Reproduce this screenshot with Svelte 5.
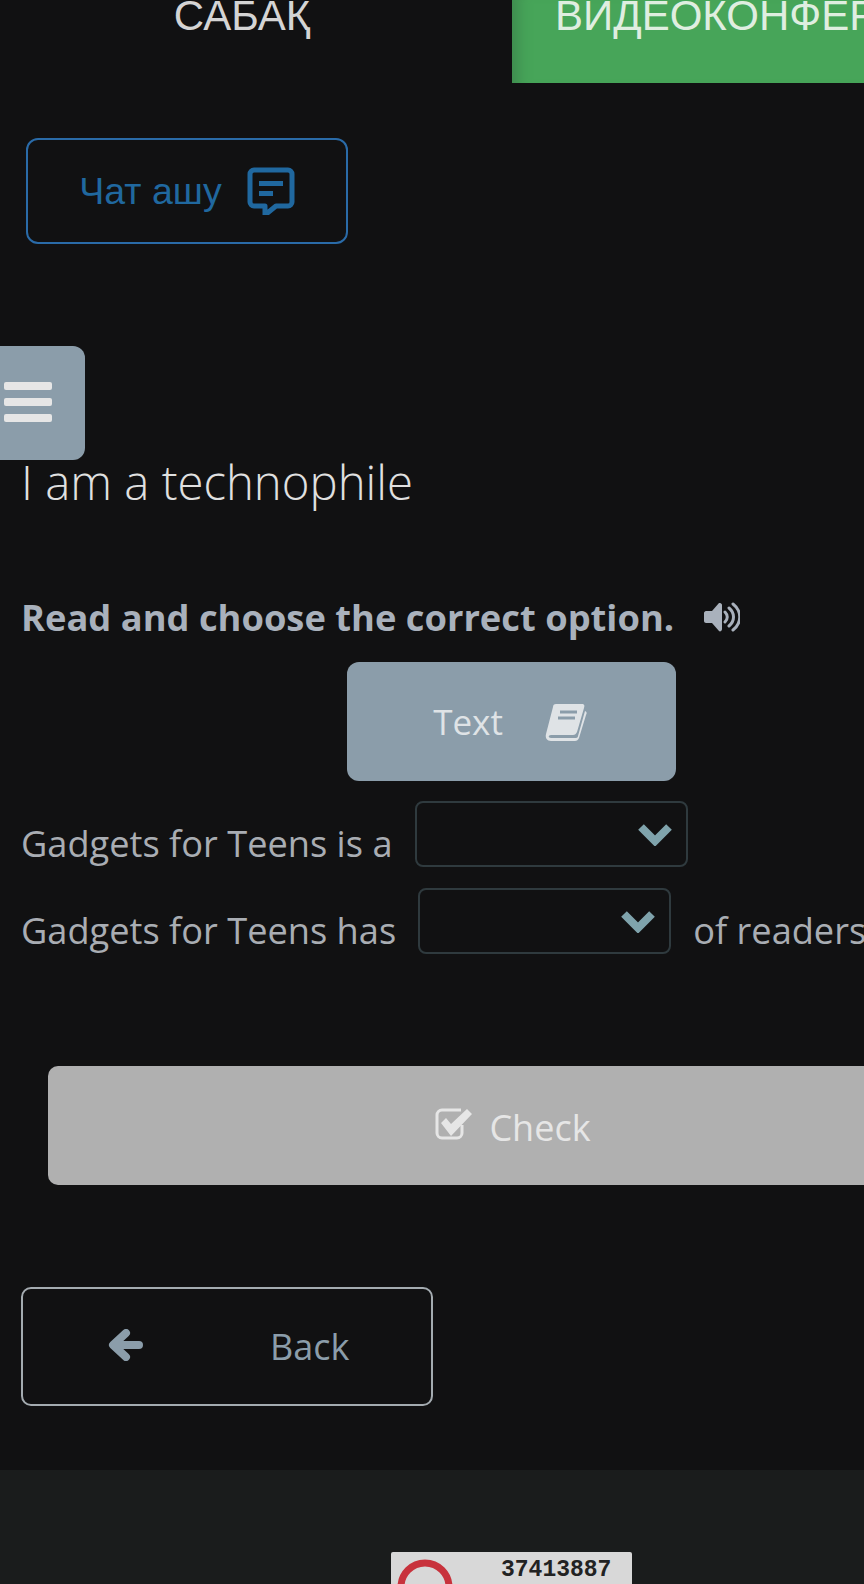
<script>
    const rows = [
        { before: 'Gadgets for Teens is a', width: 273, after: '' },
        { before: 'Gadgets for Teens has', width: 253, after: 'of readers' }
    ];
</script>

<div class="page">
    <nav class="tabs">
        <div class="tab">САБАҚ</div>
        <div class="tab active">ВИДЕОКОНФЕРЕНЦИЯ</div>
    </nav>

    <button class="chat">
        <span>Чат ашу</span>
        <svg width="48" height="48" viewBox="0 0 48 48" aria-hidden="true">
            <path d="M7 3h34a4 4 0 0 1 4 4v28a4 4 0 0 1-4 4H29l-11 9v-9H7a4 4 0 0 1-4-4V7a4 4 0 0 1 4-4z" fill="none" stroke="currentColor" stroke-width="5" stroke-linejoin="round"/>
            <path d="M12 14h24v5H12zM12 24h14v5H12z" fill="currentColor"/>
        </svg>
    </button>

    <button class="menu" aria-label="Menu">
        <span></span><span></span><span></span>
    </button>

    <h1>I am a technophile</h1>

    <p class="task">
        Read and choose the correct option.
        <svg width="36" height="32" viewBox="0 0 36 32" aria-hidden="true">
            <path d="M16 2c1 0 2 1 2 2v24c0 2-2 3-3 2L8 22H2c-1 0-2-1-2-2v-8c0-1 1-2 2-2h6l7-8z" fill="currentColor"/>
            <path d="M21 11c3 3 3 7 0 10M25 7c6 5 6 13 0 18M29 3c9 7 9 19 0 26" fill="none" stroke="currentColor" stroke-width="3" stroke-linecap="round"/>
        </svg>
    </p>

    <button class="text-btn">
        <span>Text</span>
        <svg width="42" height="38" viewBox="0 0 42 38" aria-hidden="true">
            <path d="M11 1h26c2 0 3 1 2 4l-7 24c-1 2-2 3-4 3H6c-3 0-3 3 0 3h25c1 0 2-1 2-2l7-25c2 1 2 2 1 4l-7 23c-1 2-2 3-4 3H6c-4 0-6-3-5-7L8 4c0-2 1-3 3-3z" fill="currentColor"/>
            <path d="M15 9h17M13 15h17" stroke="#8b9daa" stroke-width="3"/>
        </svg>
    </button>

    {#each rows as row}
        <div class="row">
            <span class="label">{row.before}</span>
            <div class="select" style="width: {row.width}px">
                <svg width="34" height="24" viewBox="0 0 34 24" aria-hidden="true">
                    <path d="M3 5l14 14L31 5" fill="none" stroke="currentColor" stroke-width="8"/>
                </svg>
            </div>
            {#if row.after}<span class="label">{row.after}</span>{/if}
        </div>
    {/each}

    <button class="check">
        <svg width="38" height="34" viewBox="0 0 38 34" aria-hidden="true">
            <path d="M27 18v8a5 5 0 0 1-5 5H7a5 5 0 0 1-5-5V8a5 5 0 0 1 5-5h19" fill="none" stroke="currentColor" stroke-width="3"/>
            <path d="M6 16l5-5 5 6L32 2l5 5-21 22z" fill="currentColor"/>
        </svg>
        <span>Check</span>
    </button>

    <button class="back">
        <svg width="36" height="32" viewBox="0 0 36 32" aria-hidden="true">
            <path d="M19 4L6 16l13 12M9 16h23" fill="none" stroke="currentColor" stroke-width="8" stroke-linecap="round" stroke-linejoin="round"/>
        </svg>
        <span>Back</span>
    </button>

    <footer>
        <div class="counter">
            <svg width="64" height="64" viewBox="0 0 64 64" aria-hidden="true">
                <circle cx="32" cy="35" r="24" fill="none" stroke="#c8323c" stroke-width="7"/>
            </svg>
            <span>37413887</span>
        </div>
    </footer>
</div>

<style>
    :global(body) {
        background-color: #111112;
    }

    .page {
        background-color: #111112;
        font-family: "Open Sans", sans-serif;
        height: 1584px;
        overflow: hidden;
        position: relative;
        width: 864px;
    }

    button {
        cursor: pointer;
        font-family: inherit;
        margin: 0;
    }

    .tabs {
        display: flex;
        font-family: "Liberation Sans", sans-serif;
        font-size: 42px;
        height: 83px;
    }

    .tab {
        box-sizing: border-box;
        color: #d4d4d4;
        flex: 0 0 512px;
        line-height: 32px;
        padding-right: 28px;
        text-align: center;
    }

    .active {
        background-color: #47a559;
        box-shadow: inset 18px 0 14px -12px #3e8a4e;
        color: #dfeee0;
        flex: 0 0 640px;
        padding: 0 0 0 43px;
        text-align: left;
        white-space: nowrap;
    }

    .chat {
        align-items: center;
        background: none;
        border: 2px solid #2a6ba8;
        border-radius: 12px;
        color: #20689f;
        display: flex;
        font-family: "Liberation Sans", sans-serif;
        font-size: 37.5px;
        gap: 25px;
        height: 106px;
        justify-content: center;
        margin: 55px 0 0 26px;
        padding: 0;
        width: 322px;
    }

    .menu {
        background-color: #8b9daa;
        border: 0;
        border-radius: 0 12px 12px 0;
        display: flex;
        flex-direction: column;
        gap: 8px;
        height: 114px;
        margin-top: 102px;
        padding: 36px 0 0 4px;
        width: 85px;
    }

    .menu span {
        background-color: #e6e6e6;
        border-radius: 2px;
        display: block;
        height: 8px;
        width: 48px;
    }

    h1 {
        color: #e0e0e0;
        font-size: 47.3px;
        font-weight: 300;
        line-height: 43px;
        margin: 0 0 0 21px;
    }

    .task {
        align-items: center;
        color: #a9b1bc;
        display: flex;
        font-size: 36.3px;
        font-weight: 700;
        gap: 30px;
        line-height: 48px;
        margin: 90px 0 0 21px;
    }

    .text-btn {
        align-items: center;
        background-color: #8b9daa;
        border: 0;
        border-radius: 12px;
        color: #dfe3e6;
        display: flex;
        font-size: 35px;
        gap: 42px;
        height: 119px;
        justify-content: center;
        margin: 21px 0 0 347px;
        padding: 0 3px 0 0;
        width: 329px;
    }

    .row {
        align-items: center;
        color: #a9adb3;
        display: flex;
        font-size: 36.2px;
        gap: 22px;
        height: 66px;
        margin: 20px 0 0 21px;
        white-space: nowrap;
    }

    .row + .row {
        margin-top: 21px;
    }

    .label {
        padding-top: 18px;
    }

    .select {
        align-items: center;
        border: 2px solid #2f3a3e;
        border-radius: 8px;
        box-sizing: border-box;
        color: #7fa3ac;
        display: flex;
        flex: none;
        height: 66px;
        justify-content: flex-end;
        padding: 0 14px 0 0;
    }

    .check {
        align-items: center;
        background-color: #b0b0b0;
        border: 0;
        border-radius: 10px 0 0 10px;
        color: #e6e6e6;
        display: flex;
        font-size: 36px;
        gap: 16px;
        height: 119px;
        justify-content: center;
        margin: 112px 0 0 48px;
        padding: 0;
        width: 930px;
    }

    .check svg {
        margin-bottom: 4px;
    }

    .check span {
        padding-top: 4px;
    }

    .back {
        align-items: center;
        background: none;
        border: 2px solid #a4abb0;
        border-radius: 10px;
        color: #8b9daa;
        display: flex;
        font-size: 36px;
        height: 119px;
        margin: 102px 0 0 21px;
        padding: 0 0 0 84px;
        width: 412px;
    }

    .back svg {
        margin: 0 127px 4px 0;
    }

    footer {
        background-color: #1a1c1c;
        height: 114px;
        margin-top: 64px;
        overflow: hidden;
        padding: 82px 0 0 391px;
    }

    .counter {
        background-color: #d8d8d8;
        border-radius: 2px 2px 0 0;
        display: flex;
        height: 80px;
        padding-left: 2px;
        width: 239px;
    }

    .counter span {
        color: #222;
        font-family: "Liberation Mono", monospace;
        font-size: 23px;
        font-weight: 700;
        line-height: 36px;
        margin-left: 44px;
    }
</style>
